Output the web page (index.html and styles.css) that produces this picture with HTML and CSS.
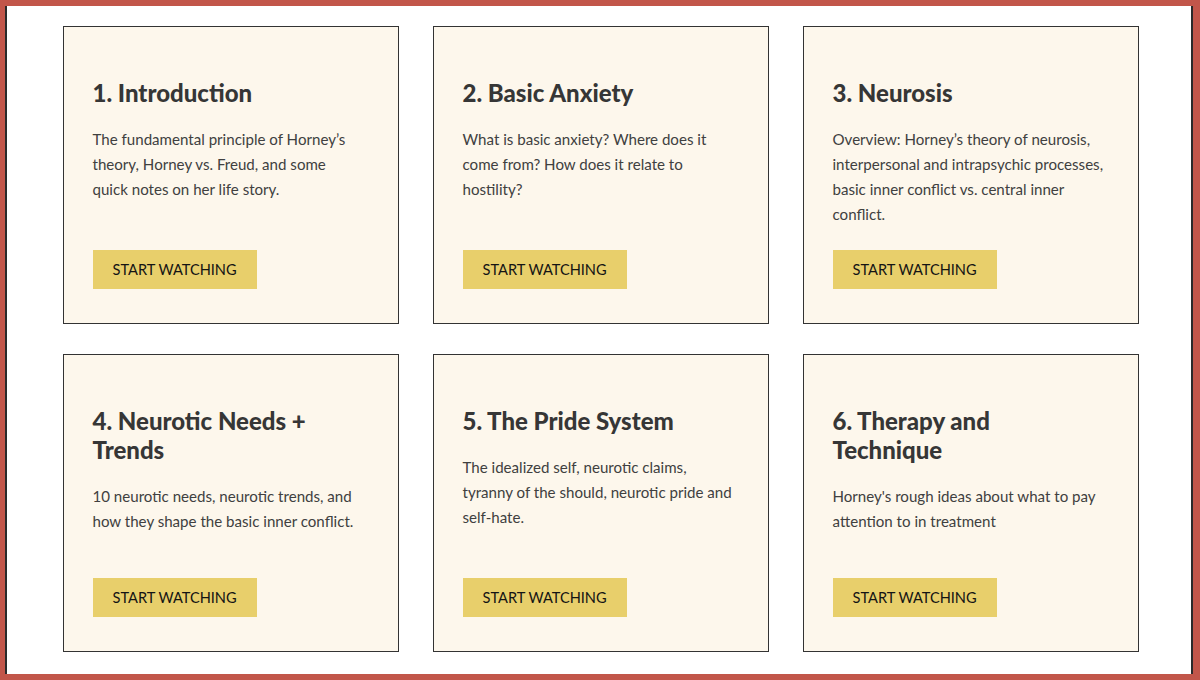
FILE: index.html
```html
<!DOCTYPE html>
<html lang="en">
<head>
<meta charset="UTF-8">
<meta name="viewport" content="width=device-width, initial-scale=1.0">
<link rel="stylesheet" href="styles.css">
<title>Karen Horney – Lessons</title>
</head>
<body>
<div class="frame">
  <div class="lessons">
    <div class="lesson">
      <h2>1. Introduction</h2>
      <p>The fundamental principle of Horney’s theory, Horney vs. Freud, and some quick notes on her life story.</p>
      <a class="watch" href="#">Start watching</a>
    </div>
    <div class="lesson">
      <h2>2. Basic Anxiety</h2>
      <p>What is basic anxiety? Where does it come from? How does it relate to hostility?</p>
      <a class="watch" href="#">Start watching</a>
    </div>
    <div class="lesson">
      <h2>3. Neurosis</h2>
      <p>Overview: Horney’s theory of neurosis, interpersonal and intrapsychic processes, basic inner conflict vs. central inner conflict.</p>
      <a class="watch" href="#">Start watching</a>
    </div>
    <div class="lesson">
      <h2>4. Neurotic Needs + Trends</h2>
      <p>10 neurotic needs, neurotic trends, and how they shape the basic inner conflict.</p>
      <a class="watch" href="#">Start watching</a>
    </div>
    <div class="lesson">
      <h2>5. The Pride System</h2>
      <p>The idealized self, neurotic claims, tyranny of the should, neurotic pride and self-hate.</p>
      <a class="watch" href="#">Start watching</a>
    </div>
    <div class="lesson">
      <h2>6. Therapy and Technique</h2>
      <p>Horney's rough ideas about what to pay attention to in treatment</p>
      <a class="watch" href="#">Start watching</a>
    </div>
  </div>
</div>
</body>
</html>
```

FILE: styles.css
```css
* {
  box-sizing: border-box;
}
body {
  margin: 0;
  height: 680px;
  overflow: hidden;
  border: 6px solid #c2564a;
  border-left-width: 5px;
  border-right-width: 7px;
  font-family: Lato, "Noto Sans", sans-serif;
  background: #c2564a;
}
.frame {
  height: 100%;
  background: #ffffff;
  border-left: 2px solid #2a2a2a;
  border-right: 2px solid #2a2a2a;
  padding: 20px 0 0 3px;
}
.lessons {
  display: grid;
  grid-template-columns: repeat(3, 336px);
  grid-auto-rows: 298px;
  column-gap: 34px;
  row-gap: 30px;
  justify-content: center;
}
.lesson {
  display: flex;
  flex-direction: column;
  align-items: flex-start;
  background: #fdf7ec;
  border: 1px solid #333333;
  padding: 51px 33px 34px 29px;
}
.lesson h2 {
  margin: 0 0 20px;
  font-size: 24px;
  line-height: 29px;
  font-weight: 900;
  color: #363636;
}
.lesson p {
  margin: 0;
  font-size: 15.1px;
  line-height: 25px;
  color: #404040;
}
.watch {
  margin-top: auto;
  display: block;
  height: 39px;
  line-height: 39px;
  padding: 0 20px;
  background: #e8cf6b;
  color: #141414;
  font-size: 14.6px;
  text-transform: uppercase;
  text-decoration: none;
}
```
